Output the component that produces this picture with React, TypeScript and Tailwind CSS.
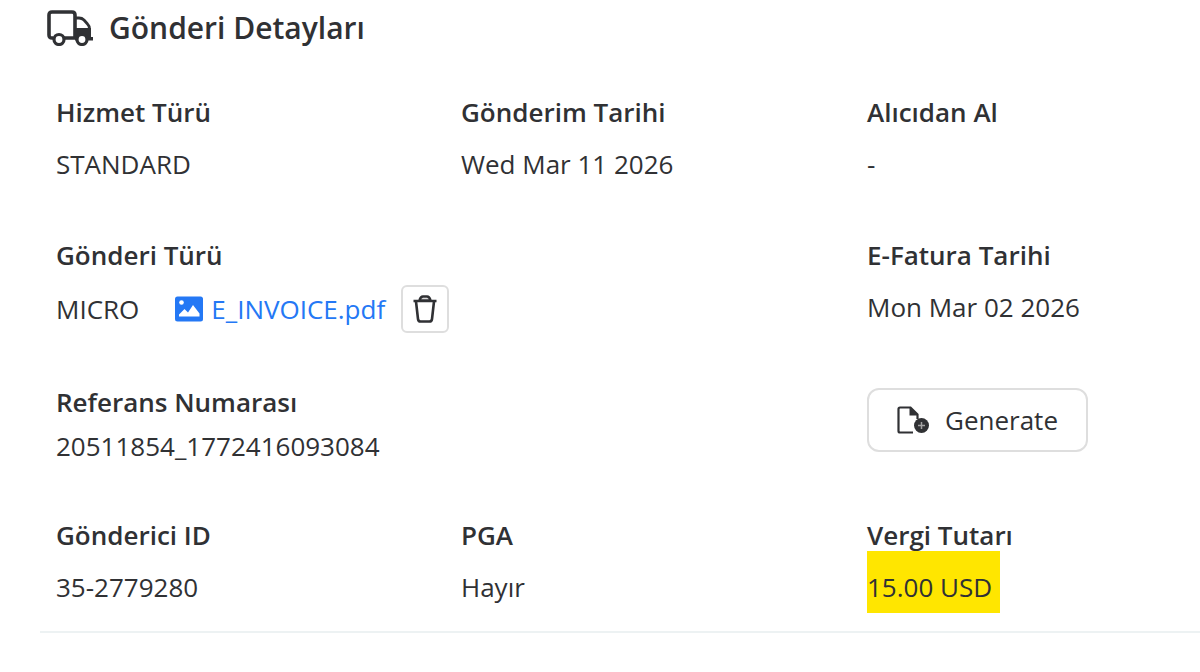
import type { ReactNode } from "react";

function TruckIcon() {
  return (
    <svg className="h-9 w-[46px] shrink-0" viewBox="0 0 46 36" fill="none" stroke="currentColor" aria-hidden="true">
      <path d="M6 28H5Q2 28 2 25V5Q2 2 5 2H25Q28 2 28 5V28H17" strokeWidth="3.6" />
      <path d="M28 8H32Q35 8 37 10L40.500 14Q42.500 16 42.500 19V28" strokeWidth="2.8" />
      <path d="M28 18H43.900V27H46V30.500H28Z" fill="currentColor" stroke="none" />
      <circle cx="12" cy="29.500" r="5" strokeWidth="3.2" fill="white" />
      <circle cx="35" cy="29.500" r="5" strokeWidth="3.2" fill="white" />
    </svg>
  );
}

function ImageIcon() {
  return (
    <svg className="h-[26px] w-7 shrink-0" viewBox="0 0 28 26" aria-hidden="true">
      <rect y="0.500" width="28" height="25" rx="2.500" fill="currentColor" />
      <circle cx="6.500" cy="6.500" r="2.300" fill="white" />
      <path d="M4 20.500V18.500L9.500 13L13 16.500L18 9L24.500 17.500V20.500Z" fill="white" />
    </svg>
  );
}

function TrashIcon() {
  return (
    <svg className="h-7 w-6" viewBox="0 0 24 28" fill="none" stroke="currentColor" strokeWidth="2.6" strokeLinejoin="round" aria-hidden="true">
      <path d="M0.500 6H23.500M6.500 5.500Q7.500 1.500 10 1.500H14Q16.500 1.500 17.500 5.500" />
      <path d="M8 4.500H16" strokeWidth="1.500" opacity="0.7" />
      <path d="M3 6.500L5 24Q5.300 26.500 7.500 26.500H16.500Q18.700 26.500 19 24L21 6.500" />
    </svg>
  );
}

function FileAddIcon() {
  return (
    <svg className="h-7 w-8" viewBox="0 0 32 28" fill="none" aria-hidden="true">
      <path d="M16 26.500H3Q1.500 26.500 1.500 25V3Q1.500 1.500 3 1.500H13.500L20.500 8.500V13" stroke="currentColor" strokeWidth="2.2" />
      <path d="M12.500 1.500V9.500H21Z" fill="currentColor" />
      <circle cx="24.500" cy="19.500" r="7.500" fill="currentColor" />
      <path d="M24.500 16V23M21 19.500H28" stroke="#a3a3a3" strokeWidth="1.5" />
    </svg>
  );
}

function Field({ label, children }: { label: string; children: ReactNode }) {
  return (
    <div>
      <dt className="font-semibold">{label}</dt>
      <dd className="pt-5 pb-2.5">{children}</dd>
    </div>
  );
}

const row = "grid grid-cols-[405fr_406fr_333fr] items-start";

export default function App() {
  return (
    <main className="bg-white pl-10 font-['Open_Sans','Noto_Sans',sans-serif] text-[26px] leading-8 text-[#303134]">
      <section className="border-b-2 border-[#edf2f3] pb-[18px]">
        <header className="flex items-center gap-4 pt-2.5 pl-[7px]">
          <TruckIcon />
          <h2 className="text-[30px] leading-9 font-semibold">Gönderi Detayları</h2>
        </header>
        <dl className="pt-[50px] pl-4">
          <div className={row}>
            <Field label="Hizmet Türü">STANDARD</Field>
            <Field label="Gönderim Tarihi">Wed Mar 11 2026</Field>
            <Field label="Alıcıdan Al">-</Field>
          </div>
          <div className={`${row} pt-[49px]`}>
            <div className="col-span-2">
              <dt className="font-semibold">Gönderi Türü</dt>
              <dd className="flex items-center pt-3.5">
                <span>MICRO</span>
                <a href="#invoice" className="ml-9 flex items-center gap-2 text-[#2478f5]">
                  <ImageIcon />
                  E_INVOICE.pdf
                </a>
                <button type="button" aria-label="Sil" className="ml-4 flex size-12 items-center justify-center rounded-md border-2 border-[#dedede]">
                  <TrashIcon />
                </button>
              </dd>
            </div>
            <Field label="E-Fatura Tarihi">Mon Mar 02 2026</Field>
          </div>
          <div className={`${row} pt-[53px]`}>
            <div className="col-span-2">
              <dt className="font-semibold">Referans Numarası</dt>
              <dd className="pt-3">20511854_1772416093084</dd>
            </div>
            <div className="pt-0.5">
              <button type="button" className="flex h-16 items-center gap-4 rounded-xl border-2 border-[#dedede] px-7">
                <FileAddIcon />
                Generate
              </button>
            </div>
          </div>
          <div className={`${row} pt-[57px]`}>
            <Field label="Gönderici ID">35-2779280</Field>
            <Field label="PGA">Hayır</Field>
            <div>
              <dt className="font-semibold">Vergi Tutarı</dt>
              <dd className="w-fit bg-[#ffe600] pt-5 pr-2 pb-2.5">15.00 USD</dd>
            </div>
          </div>
        </dl>
      </section>
    </main>
  );
}
